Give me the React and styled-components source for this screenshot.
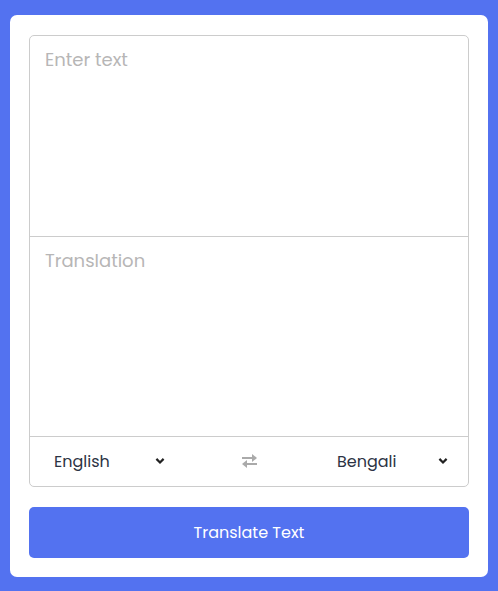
import React, { useState } from 'react'
import styled, { createGlobalStyle } from 'styled-components'

const GlobalStyle = createGlobalStyle`
  * { margin: 0; padding: 0; box-sizing: border-box; }
  body {
    font-family: "Poppins", "Open Sans", "Liberation Sans", sans-serif;
    background: #5372f0;
  }
`

const Page = styled.div`
  min-height: 591px;
  display: flex;
  align-items: center;
  justify-content: center;
  padding: 0 10px;
`

const Card = styled.div`
  width: 100%;
  background: #fff;
  border-radius: 7px;
  padding: 20px 19px 19px;
`

const Wrapper = styled.div`
  border: 1px solid #ccc;
  border-radius: 5px;
`

const TextBox = styled.textarea`
  display: block;
  width: 100%;
  height: 200px;
  border: none;
  outline: none;
  resize: none;
  background: none;
  font-family: inherit;
  font-size: 18px;
  color: #333;
  padding: 10px 15px;
  border-radius: 5px 5px 0 0;
  & + & {
    border-top: 1px solid #ccc;
    border-radius: 0;
  }
  &::placeholder {
    color: #b7b6b6;
  }
`

const Controls = styled.div`
  height: 50px;
  display: flex;
  align-items: center;
  justify-content: space-between;
  border-top: 1px solid #ccc;
  padding: 0 18px 0 24px;
`

const LangPick = styled.label`
  position: relative;
  display: flex;
  align-items: center;
  width: 113px;
`

const Select = styled.select`
  appearance: none;
  width: 100%;
  border: none;
  outline: none;
  background: none;
  font-family: inherit;
  font-size: 16px;
  color: #2c3344;
  padding-left: 0;
  cursor: pointer;
`

const Chevron = styled.svg`
  position: absolute;
  right: 2px;
  top: 50%;
  transform: translateY(-50%);
  pointer-events: none;
`

const SwapIcon = styled.svg`
  cursor: pointer;
  margin-left: -6px;
`

const Button = styled.button`
  width: 100%;
  height: 51px;
  margin-top: 20px;
  border: none;
  border-radius: 5px;
  background: #5372f0;
  color: #fff;
  font-family: inherit;
  font-size: 16px;
  cursor: pointer;
`

const langs = { 'en-GB': 'English', 'bn-IN': 'Bengali', 'hi-IN': 'Hindi', 'fr-FR': 'French' }

function Lang({ value, onChange }) {
  return (
    <LangPick>
      <Select value={value} onChange={(e) => onChange(e.target.value)}>
        {Object.entries(langs).map(([k, v]) => (
          <option key={k} value={k}>{v}</option>
        ))}
      </Select>
      <Chevron width='10' height='7' viewBox='0 0 10 7'>
        <path d='M1.4 1.4 L5 5 L8.6 1.4' fill='none' stroke='#222' strokeWidth='2.2' />
      </Chevron>
    </LangPick>
  )
}

export default function App() {
  const [from, setFrom] = useState('en-GB')
  const [to, setTo] = useState('bn-IN')
  const [text, setText] = useState('')
  const [out, setOut] = useState('')

  const swap = () => {
    setFrom(to)
    setTo(from)
    setText(out)
    setOut(text)
  }

  return (
    <>
      <GlobalStyle />
      <Page>
        <Card>
          <Wrapper>
            <TextBox spellCheck='false' placeholder='Enter text' value={text} onChange={(e) => setText(e.target.value)} />
            <TextBox spellCheck='false' readOnly placeholder='Translation' value={out} />
            <Controls>
              <Lang value={from} onChange={setFrom} />
              <SwapIcon onClick={swap} width='17' height='14' viewBox='0 0 17 14'>
                <g fill='#aaa'>
                  <rect x='1' y='3' width='12' height='2' />
                  <path d='M11 0 L16 4 L11 8 Z' />
                  <rect x='4' y='9' width='12' height='2' />
                  <path d='M6 6 L1 10 L6 14 Z' />
                </g>
              </SwapIcon>
              <Lang value={to} onChange={setTo} />
            </Controls>
          </Wrapper>
          <Button>Translate Text</Button>
        </Card>
      </Page>
    </>
  )
}
